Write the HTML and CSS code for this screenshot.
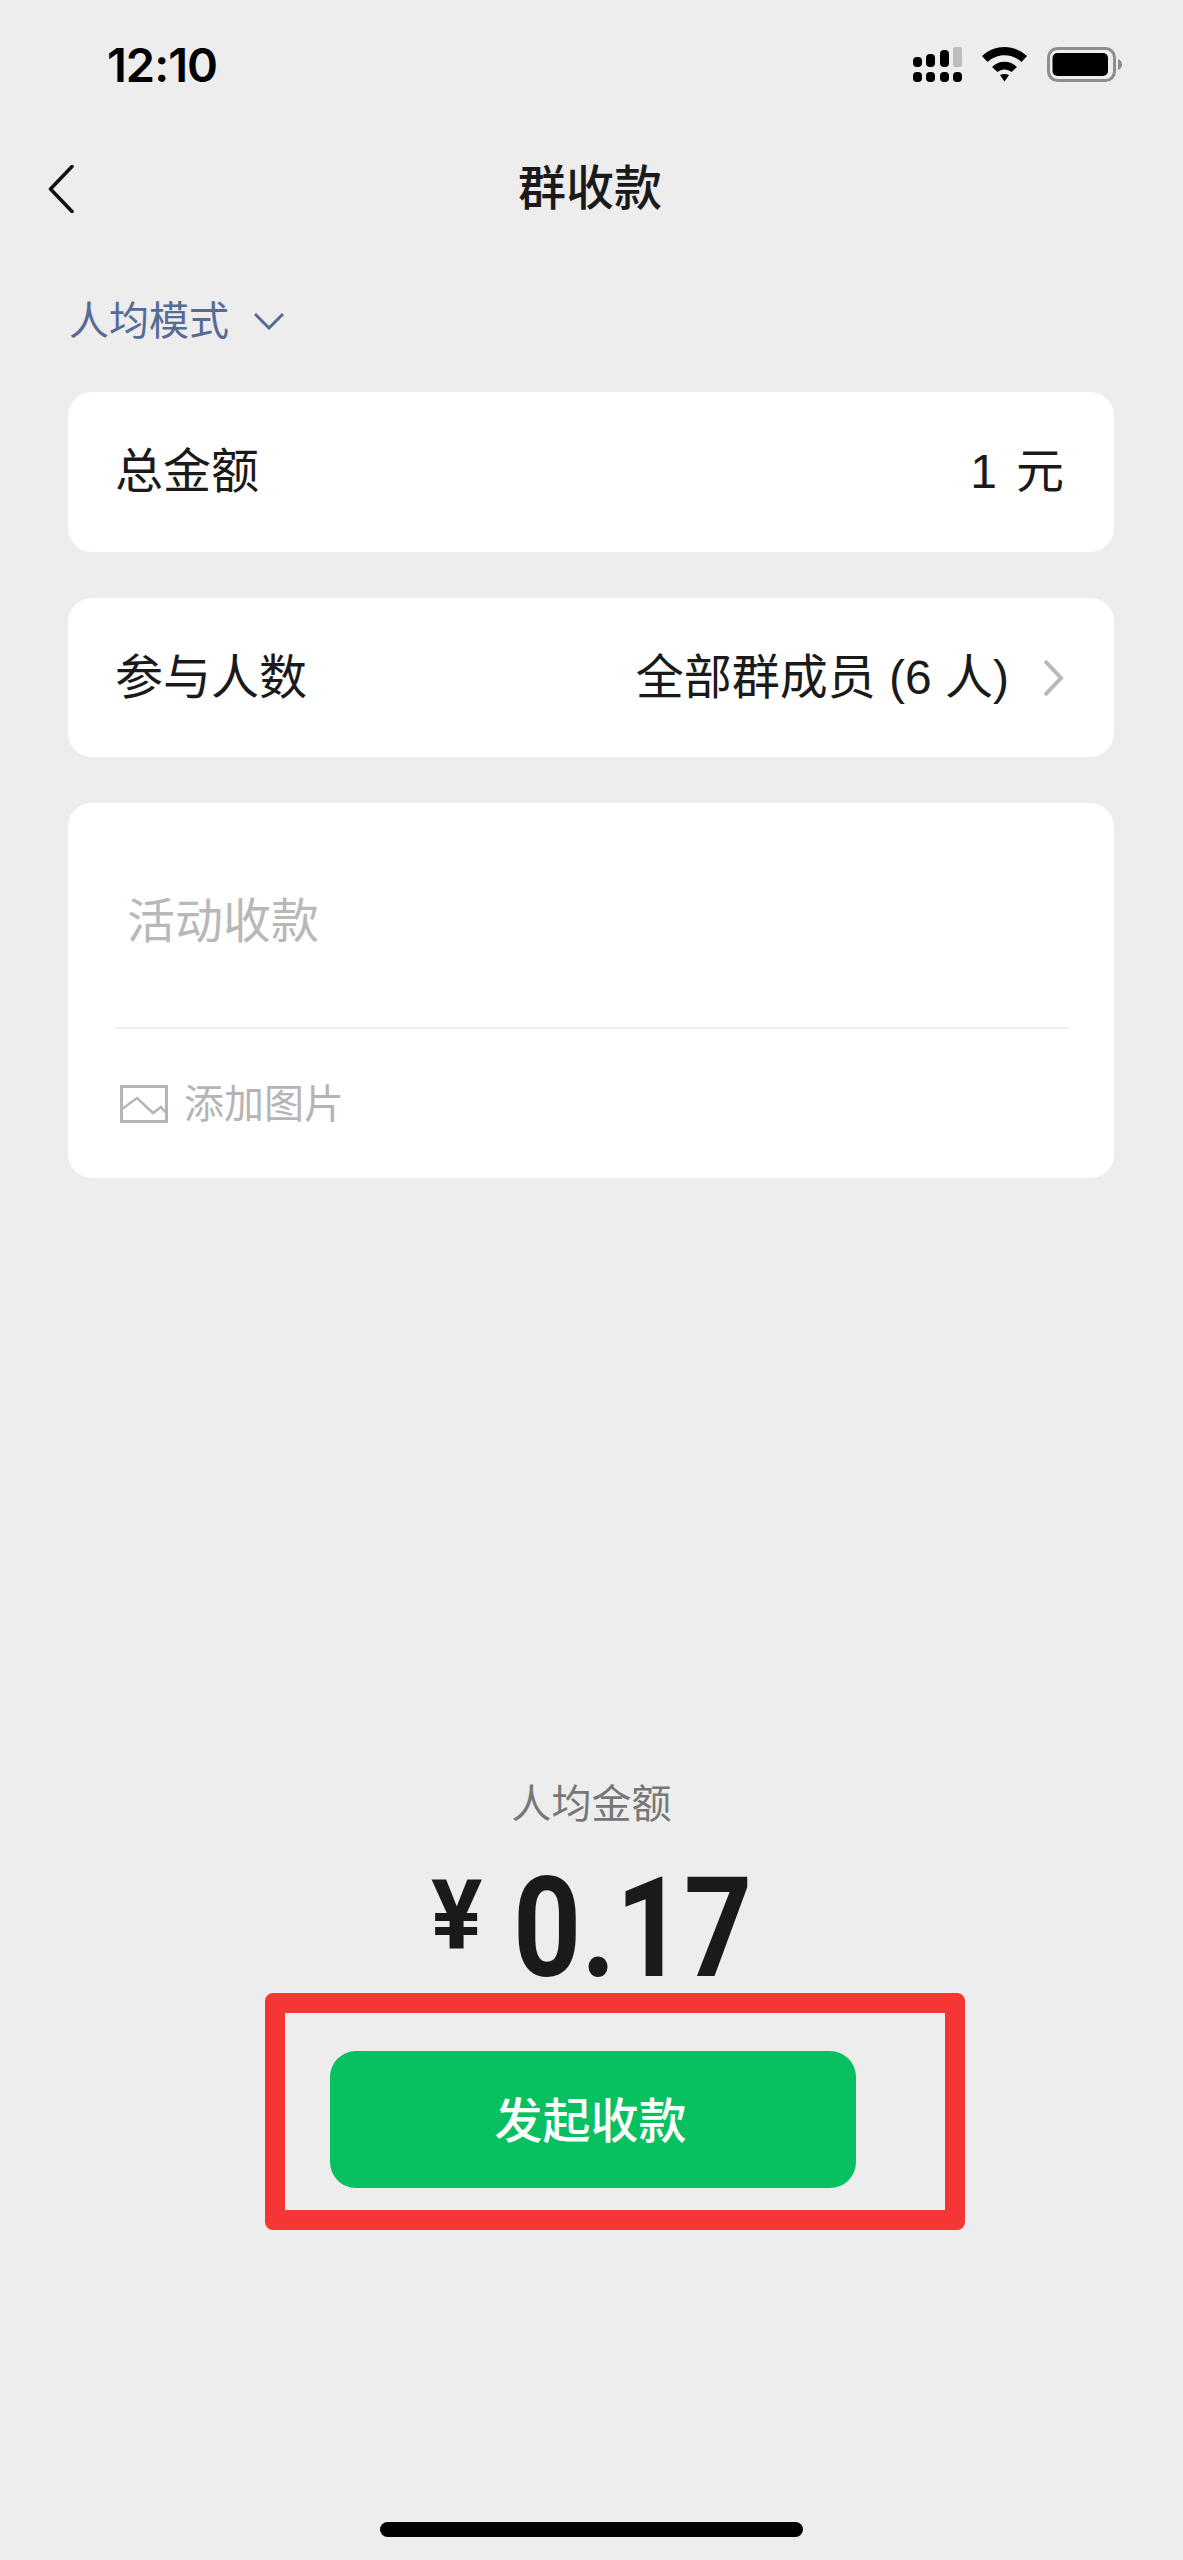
FILE: index.html
```html
<!DOCTYPE html>
<html lang="zh-CN">
<head>
  <meta charset="UTF-8">
  <meta name="viewport" content="width=device-width, initial-scale=1.0">
  <title>群收款</title>
  <link rel="stylesheet" href="styles.css">
</head>
<body>
  <div class="status-bar">
    <span class="time">12:10</span>
    <div class="status-icons">
      <svg class="signal" width="49" height="35" viewBox="0 0 49 35">
        <rect x="0" y="10" width="9" height="10" rx="4" fill="#000"/>
        <rect x="13" y="7" width="9" height="13" rx="4" fill="#000"/>
        <rect x="27" y="3" width="9" height="17" rx="4" fill="#000"/>
        <rect x="40" y="0" width="9" height="20" rx="2" fill="#bdbdbd"/>
        <rect x="0" y="25" width="9" height="10" rx="4" fill="#000"/>
        <rect x="13" y="25" width="9" height="10" rx="4" fill="#000"/>
        <rect x="27" y="25" width="9" height="10" rx="4" fill="#000"/>
        <rect x="40" y="25" width="9" height="10" rx="4" fill="#000"/>
      </svg>
      <svg class="wifi" width="45" height="35" viewBox="0 0 45 35">
        <path d="M0 9C13 -3 32 -3 45 9L39.500 15C30 6 15 6 5.500 15Z" fill="#000"/>
        <path d="M10 20C17 13 28 13 35 20L29.500 25C25.500 21.500 19.500 21.500 15.500 25Z" fill="#000"/>
        <path d="M18 28C20.500 26.500 24.500 26.500 27 28L22.500 34.500Z" fill="#000"/>
      </svg>
      <svg class="battery" width="75" height="35" viewBox="0 0 75 35">
        <rect x="1.500" y="1.500" width="66" height="32" rx="9" fill="none" stroke="#8e8e8e" stroke-width="3"/>
        <rect x="5.500" y="6" width="55.500" height="23" rx="5" fill="#000"/>
        <path d="M71 12C74 13 75 15 75 17.500C75 20 74 22 71 23Z" fill="#8e8e8e"/>
      </svg>
    </div>
  </div>

  <div class="nav-bar">
    <svg class="back" width="26" height="48" viewBox="0 0 26 48">
      <path d="M24 1.500L2.500 24L24 46.500" fill="none" stroke="#111" stroke-width="3.500" stroke-linecap="round" stroke-linejoin="round"/>
    </svg>
    <h1 class="title">群收款</h1>
  </div>

  <div class="mode">
    <span class="mode-text">人均模式</span>
    <svg width="32" height="18" viewBox="0 0 32 18">
      <path d="M2 2L16 16L30 2" fill="none" stroke="#576b95" stroke-width="3"/>
    </svg>
  </div>

  <div class="cards">
    <div class="card row">
      <span>总金额</span>
      <span class="amount"><span>1</span><span>元</span></span>
    </div>
    <div class="card row">
      <span>参与人数</span>
      <span class="members">
        <span>全部群成员 (6 人)</span>
        <svg width="21" height="38" viewBox="0 0 21 38">
          <path d="M2 2L18 19L2 36" fill="none" stroke="#b8b8b8" stroke-width="4"/>
        </svg>
      </span>
    </div>
    <div class="card note">
      <div class="note-text">活动收款</div>
      <div class="add-pic">
        <svg width="48" height="38" viewBox="0 0 48 38">
          <rect x="1.500" y="1.500" width="45" height="35" fill="none" stroke="#b5b5b5" stroke-width="3"/>
          <path d="M2 24L17 13L33 28L41 22L47 29" fill="none" stroke="#b5b5b5" stroke-width="2.500"/>
        </svg>
        <span>添加图片</span>
      </div>
    </div>
  </div>

  <div class="bottom">
    <div class="avg-label">人均金额</div>
    <div class="avg-amount"><span class="yen">¥</span><span class="num">0.17</span></div>
    <div class="red-box">
      <button class="submit" type="button">发起收款</button>
    </div>
  </div>

  <div class="home-indicator"></div>
</body>
</html>
```

FILE: styles.css
```css
* {
  box-sizing: border-box;
}
body {
  margin: 0;
  width: 1183px;
  height: 2560px;
  background-color: #ededed;
  font-family: "Liberation Sans", "Noto Sans CJK SC", sans-serif;
  color: #1a1a1a;
  overflow: hidden;
}
.status-bar {
  height: 35px;
  margin-top: 47px;
  padding: 0 61px 0 107px;
  display: flex;
  justify-content: space-between;
  align-items: flex-start;
}
.time {
  font-family: Inter, "Liberation Sans", sans-serif;
  font-size: 47px;
  font-weight: 600;
  line-height: 35px;
  letter-spacing: -1px;
  color: #000;
}
.status-icons {
  display: flex;
  gap: 20px;
  align-items: flex-start;
}
.nav-bar {
  margin-top: 83px;
  height: 48px;
  padding-left: 48px;
  display: flex;
  align-items: center;
}
.back {
  flex: none;
}
.title {
  margin: 0 0 0 444px;
  font-size: 48px;
  font-weight: 500;
  line-height: 48px;
}
.mode {
  margin-top: 88px;
  margin-left: 69px;
  height: 40px;
  display: flex;
  align-items: center;
  gap: 24px;
  font-size: 40px;
  line-height: 40px;
  color: #576b95;
}
.cards {
  margin: 51px 69px 0 68px;
  display: flex;
  flex-direction: column;
  gap: 46px;
}
.card {
  background-color: #fff;
  border-radius: 24px;
}
.row {
  height: 159.5px;
  padding: 1px 50px 0 47px;
  display: flex;
  justify-content: space-between;
  align-items: center;
  font-size: 48px;
  line-height: 48px;
}
.amount {
  display: flex;
  gap: 19px;
}
.members {
  display: flex;
  align-items: center;
  gap: 34px;
}
.note {
  height: 375px;
  padding: 95px 44px 0 46px;
}
.note-text {
  height: 131px;
  padding-left: 13px;
  border-bottom: 2px solid #efefef;
  font-size: 48px;
  line-height: 48px;
  color: #b8b8b8;
}
.add-pic {
  margin-top: 55px;
  padding-left: 6px;
  display: flex;
  align-items: center;
  gap: 16px;
  font-size: 40px;
  line-height: 40px;
  color: #b5b5b5;
}
.bottom {
  position: absolute;
  top: 1784px;
  left: 0;
  width: 1183px;
  display: flex;
  flex-direction: column;
  align-items: center;
}
.avg-label {
  font-size: 40px;
  line-height: 40px;
  color: #777;
}
.avg-amount {
  align-self: flex-start;
  margin: 43px 0 0 431px;
  height: 110px;
  display: flex;
  align-items: flex-start;
  font-family: Roboto, sans-serif;
  font-weight: 700;
  color: #1a1a1a;
}
.yen {
  width: 82px;
  font-size: 96px;
  line-height: 96px;
}
.num {
  display: block;
  margin-top: 6px;
  font-size: 140px;
  line-height: 110px;
  transform: scaleX(0.85);
  transform-origin: left center;
}
.red-box {
  margin: 16px 0 0 46px;
  width: 700px;
  height: 237px;
  padding: 38px 0 0 45px;
  border: 20px solid #f63535;
  border-radius: 8px;
}
.submit {
  display: block;
  width: 526px;
  height: 137px;
  padding: 0 4px 6px 0;
  border: none;
  border-radius: 26px;
  background-color: #07c160;
  color: #fff;
  font-family: inherit;
  font-size: 48px;
  font-weight: 500;
  cursor: pointer;
}
.home-indicator {
  position: absolute;
  left: 380px;
  top: 2522px;
  width: 423px;
  height: 15px;
  border-radius: 8px;
  background-color: #000;
}
```
